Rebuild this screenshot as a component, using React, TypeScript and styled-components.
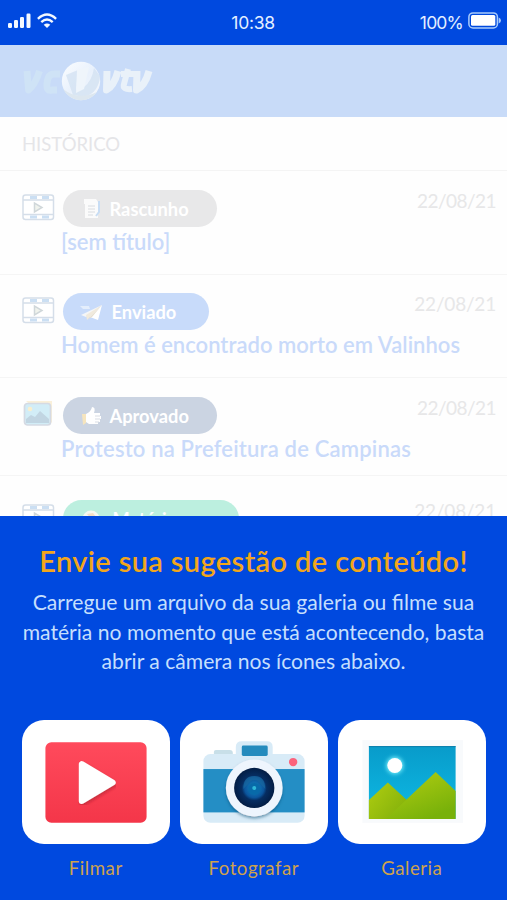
import React from "react";
import styled, { createGlobalStyle } from "styled-components";

const Global = createGlobalStyle`
  * { box-sizing: border-box; }
  html, body { margin: 0; padding: 0; }
  body { background: #fff; font-family: Lato, "Liberation Sans", sans-serif; }
`;

const Screen = styled.div`
  width: 507px;
  height: 900px;
  display: flex;
  flex-direction: column;
  overflow: hidden;
  background: #fefefe;
`;

const StatusBar = styled.header`
  height: 45px;
  flex: none;
  display: grid;
  grid-template-columns: 1fr auto 1fr;
  align-items: center;
  padding: 0 6px 2px 8px;
  background: #0049df;
  color: #e3efff;
  font: 400 17.5px/20px Inter, sans-serif;
`;

const Signals = styled.div`
  display: flex;
  align-items: center;
  gap: 6px;
  margin-top: -2px;
`;

const Clock = styled.span`
  letter-spacing: -0.3px;
  padding-top: 2px;
  margin-left: -3px;
`;

const Battery = styled.div`
  display: flex;
  justify-content: flex-end;
  align-items: center;
  gap: 5px;
  letter-spacing: -0.8px;
  & > span { padding-top: 2px; }
  svg { margin-top: -2px; }
`;

const BrandBar = styled.div`
  height: 72px;
  flex: none;
  background: #c8dbf8;
  padding: 14px 0 0 20px;
`;

const Heading = styled.h2`
  margin: 0;
  height: 54px;
  flex: none;
  padding-left: 22px;
  border-bottom: 1px solid #f4f4f4;
  font-size: 18.5px;
  line-height: 54px;
  font-weight: 400;
  color: #e5e5e8;
`;

const History = styled.div`
  height: 345px;
  flex: none;
  overflow: hidden;
`;

const Entry = styled.article<{ $height: number; $top: number }>`
  height: ${(p) => p.$height}px;
  display: grid;
  grid-template-columns: 33px 1fr auto;
  grid-template-rows: 37px auto;
  column-gap: 8px;
  padding: ${(p) => p.$top}px 11px 0 22px;
  border-bottom: 1px solid #f5f5f5;
`;

const Thumb = styled.div`
  padding-top: 4px;
  svg { display: block; }
`;

const Pill = styled.div<{ $color: string; $width: number }>`
  width: ${(p) => p.$width}px;
  height: 37px;
  border-radius: 19px;
  background: ${(p) => p.$color};
  color: #fff;
  display: flex;
  align-items: center;
  gap: 7px;
  padding-left: 16.5px;
  font-size: 18.3px;
  font-weight: 700;
`;

const DateText = styled.time<{ $spacing: number }>`
  font-size: 19px;
  line-height: 24px;
  letter-spacing: ${(p) => p.$spacing}px;
  color: #e7e7e8;
  margin-top: -1px;
`;

const EntryTitle = styled.h3<{ $spacing: number }>`
  grid-column: 2 / 4;
  margin: 0 0 0 -2px;
  font-size: 22px;
  line-height: 30px;
  font-weight: 600;
  letter-spacing: ${(p) => p.$spacing}px;
  color: #c9dafa;
  white-space: nowrap;
`;

const Sheet = styled.section`
  flex: 1;
  background: #0049df;
  text-align: center;
  padding-top: 27px;
`;

const SheetTitle = styled.h1`
  margin: 0;
  font-size: 29px;
  line-height: 36px;
  font-weight: 600;
  letter-spacing: 0.37px;
  color: #f2a61b;
  white-space: nowrap;
`;

const SheetText = styled.p`
  margin: 9px 0 0;
  font-size: 21.13px;
  line-height: 29.5px;
  color: #c5dffd;
  white-space: nowrap;
`;

const Actions = styled.div`
  display: grid;
  grid-template-columns: repeat(3, 148.5px);
  column-gap: 9.5px;
  padding-left: 21.5px;
  margin-top: 43px;
`;

const Action = styled.button`
  display: block;
  border: 0;
  padding: 0;
  background: none;
  font: 400 18.7px/24px Lato, sans-serif;
  letter-spacing: 0.5px;
  color: #cda24e;
`;

const Tile = styled.div`
  height: 124px;
  border-radius: 22px;
  background: #fff;
  margin-bottom: 12px;
  svg { display: block; width: 100%; }
`;

const SignalIcon = () => (
  <svg width="23" height="16" viewBox="0 0 23 16" fill="#f4f9ff">
    <rect x="0" y="10" width="4" height="5" rx="1.2" />
    <rect x="6" y="7" width="4" height="8" rx="1.2" />
    <rect x="12" y="4" width="4" height="11" rx="1.2" />
    <rect x="18.500" y="0.500" width="4" height="14.500" rx="1.2" />
  </svg>
);

const WifiIcon = () => (
  <svg width="20" height="16" viewBox="0 0 20 16" fill="none" stroke="#f4f9ff" strokeWidth="2.4">
    <path d="M.9 5.800Q10-2.600 19.100 5.800" />
    <path d="M4.300 9.200Q10 4 15.700 9.200" />
    <path d="M10 15 6.700 11.800Q10 9 13.300 11.800Z" fill="#f4f9ff" stroke="none" />
  </svg>
);

const BatteryIcon = () => (
  <svg width="33" height="17" viewBox="0 0 33 17">
    <rect x="0.900" y="0.900" width="28.500" height="15" rx="4" fill="none" stroke="#a9ccfb" strokeWidth="1.500" />
    <rect x="3" y="3" width="24.300" height="10.800" rx="1.500" fill="#fff" />
    <path d="M30.700 5.500q2.300 1 2.300 3t-2.300 3z" fill="#a9ccfb" />
  </svg>
);

const Logo = () => (
  <svg width="136" height="46" viewBox="0 0 136 46">
    <defs>
      <linearGradient id="orb" x1="0" y1="0" x2="1" y2="1">
        <stop offset="0" stopColor="#fbfdff" />
        <stop offset=".5" stopColor="#e9f1fc" />
        <stop offset="1" stopColor="#f5f8fb" />
      </linearGradient>
    </defs>
    <g fill="none" strokeLinejoin="round" strokeWidth="6.800">
      <path d="M7 12 8.500 31Q15 26 19.500 12" stroke="#cfe3f6" />
      <path d="M40 15H34Q28 15 27 24T32 31H37" stroke="#cfe3f6" />
    </g>
    <circle cx="61" cy="22" r="19.200" fill="url(#orb)" />
    <path d="M46 16 58 11 56 31 64 28Q72 22 74 9L80 17Q79 33 65 38L53 36Z" fill="#d0dff1" opacity=".7" />
    <path d="M57 11 69 8 64 30 56 34Z" fill="#eff5fb" />
    <path d="M43 30Q58 42 77 33Q69 43 58 41Q48 39 43 30Z" fill="#dde7ef" />
    <g fill="none" stroke="#e9f1f9" strokeLinejoin="round" strokeWidth="7">
      <path d="M87 12 86.500 31Q94 27 98 12" />
      <path d="M108 10 104 25Q102 31 112 30M101 15H114" strokeWidth="6" />
      <path d="M117 12 116.500 31Q125 27 129 12" />
    </g>
  </svg>
);

const FilmIcon = () => (
  <svg width="33" height="27" viewBox="0 0 33 27" fill="none" stroke="#d5dee9" strokeWidth="1.500">
    <rect x="1" y="1" width="30.500" height="24.500" rx="2.500" fill="#fff" />
    <path d="M1 6H31.500M1 20.500H31.500" />
    <path d="M8 3.500H15M20 3.500H27M8 23H15M20 23H27" stroke="#cbdff3" strokeWidth="3" />
    <path d="M12.500 9V18L20 13.500Z" fill="#f0f3ed" stroke="#d0d7da" />
  </svg>
);

const PhotoIcon = () => (
  <svg width="31" height="27" viewBox="0 0 31 27">
    <path d="M4 0H30V22" fill="#faf0da" />
    <rect x="2.500" y="2.500" width="26" height="21.500" rx="3" fill="#d2edf7" stroke="#d5dae3" strokeWidth="1.700" />
    <circle cx="8" cy="8" r="2.300" fill="#f8efcf" />
    <path d="M4 22V18L9 14 13 16 18 10 27 18V22Z" fill="#c1d5e2" />
  </svg>
);

const DraftIcon = () => (
  <svg width="23" height="22" viewBox="0 0 23 22">
    <path d="M4 1H16L18 4V20H5V6H4Z" fill="#fbfbfb" />
    <path d="M8 8H15M8 11H15M8 14H15M8 17H13" stroke="#d9dce0" />
    <path d="M19 3V14L16 18" fill="none" stroke="#c8ddf4" strokeWidth="2" />
  </svg>
);

const PlaneIcon = () => (
  <svg width="25" height="22" viewBox="0 0 25 22">
    <path d="M0 5 9 5 10 8 3 8Z" fill="#e4eefc" />
    <path d="M22 4 1 14 6 16Z" fill="#f5f6f7" />
    <path d="M22 4 6 14 7 19Z" fill="#f1eadc" />
    <path d="M22 4 10 16 18 19Z" fill="#fff" />
    <path d="M22 4 8 18 12 16Z" fill="#e9e0cd" />
  </svg>
);

const ThumbIcon = () => (
  <svg width="23" height="22" viewBox="0 0 23 22">
    <path d="M2 9H6V18L3 20Z" fill="#f6e5be" />
    <path d="M6 9Q11 7 12 2Q16 2 14 8H20V11H21V14H20V17H18V19H9L6 17Z" fill="#fff" />
    <path d="M15 11H20M15 14H20M15 17H19" stroke="#d9dde4" />
  </svg>
);

const NewsIcon = () => (
  <svg width="26" height="22" viewBox="0 0 26 22">
    <circle cx="11" cy="11" r="8.500" fill="#f5f8f1" />
    <path d="M7 6 13 5 16 9 12 12Z" fill="#f2dfc6" />
  </svg>
);

const PlayArt = () => (
  <svg width="149" height="124" viewBox="0 0 149 124">
    <defs>
      <linearGradient id="red" x1="0" y1="0" x2="0" y2="1">
        <stop stopColor="#ff4a5c" />
        <stop offset="1" stopColor="#f43649" />
      </linearGradient>
      <filter id="playShade"><feDropShadow dx="1" dy="2" stdDeviation="1.500" floodColor="#8f1426" floodOpacity=".45" /></filter>
    </defs>
    <rect x="23.500" y="22" width="101.500" height="81" rx="6" fill="url(#red)" />
    <path d="M60 44V81L91 62.500Z" fill="#fff" stroke="#fff" strokeWidth="6" strokeLinejoin="round" filter="url(#playShade)" />
  </svg>
);

const CameraArt = () => (
  <svg width="149" height="124" viewBox="0 0 149 124">
    <defs>
      <radialGradient id="lens">
        <stop stopColor="#1688c4" />
        <stop offset=".48" stopColor="#0b559c" />
        <stop offset=".62" stopColor="#062d61" />
        <stop offset="1" stopColor="#031d44" />
      </radialGradient>
      <filter id="lensShade"><feDropShadow dx="0" dy="2" stdDeviation="1.500" floodColor="#06456d" floodOpacity=".5" /></filter>
    </defs>
    <path d="M34 35V32Q34 30 36 30H50Q53 30 53 33V35Z" fill="#c8dfe8" />
    <rect x="23.500" y="34" width="101.500" height="69" rx="7" fill="#d8ebf7" />
    <path d="M56 38V27Q56 21 62 21H87Q93 21 93 27V38Z" fill="#d8ebf7" />
    <rect x="62" y="25.500" width="26" height="10.500" rx="1.500" fill="#248bbd" />
    <rect x="23.500" y="49" width="101.500" height="43.500" fill="#248ec5" />
    <circle cx="113.500" cy="42" r="4.200" fill="#fb637c" />
    <circle cx="74.500" cy="68" r="28.500" fill="#eef5fd" filter="url(#lensShade)" />
    <circle cx="74.500" cy="68" r="20.200" fill="url(#lens)" />
    <path d="M63.500 69Q63.500 56 74.500 56T85.500 69L81.500 65Q74.500 55 67.500 65Z" fill="#18679f" opacity=".75" />
    <circle cx="74.500" cy="69" r="6" fill="#086aa9" />
    <circle cx="74.500" cy="68" r="2" fill="#30b8d8" />
  </svg>
);

const GalleryArt = () => (
  <svg width="149" height="124" viewBox="0 0 149 124">
    <defs>
      <linearGradient id="sky" x1="0" y1="0" x2="0" y2="1">
        <stop stopColor="#089bca" /><stop offset="1" stopColor="#0ebbe5" />
      </linearGradient>
      <linearGradient id="hill" x1="0" y1="0" x2=".6" y2="1">
        <stop stopColor="#b5cf12" /><stop offset="1" stopColor="#78b10a" />
      </linearGradient>
      <linearGradient id="hillBack" x1="0" y1="0" x2="1" y2=".6">
        <stop stopColor="#b0ce10" /><stop offset="1" stopColor="#7fae0b" />
      </linearGradient>
      <filter id="glow" x="-1" y="-1" width="3" height="3"><feGaussianBlur stdDeviation="2" /></filter>
    </defs>
    <rect x="24.500" y="20" width="101" height="83" fill="#f8fafc" />
    <rect x="31" y="26" width="87" height="73" fill="url(#sky)" />
    <path d="M31 26.500H118" stroke="#087caa" />
    <circle cx="57" cy="45.500" r="8.500" fill="#7df3ff" filter="url(#glow)" />
    <circle cx="57" cy="45.500" r="7.500" fill="#fff" />
    <path d="M31 80 50 62.500 69 80 80 99H31Z" fill="url(#hillBack)" />
    <path d="M48 99 98 52 118 71V99Z" fill="url(#hill)" />
  </svg>
);

const entries = [
  { label: "Rascunho", title: "[sem título]", color: "#e8e8e9", width: 154, height: 104, top: 19, spacing: 0, dateSpacing: -0.55, thumb: <FilmIcon />, icon: <DraftIcon /> },
  { label: "Enviado", title: "Homem é encontrado morto em Valinhos", color: "#c8dbfa", width: 146, height: 103, top: 18, spacing: 0.02, dateSpacing: -0.2, thumb: <FilmIcon />, icon: <PlaneIcon /> },
  { label: "Aprovado", title: "Protesto na Prefeitura de Campinas", color: "#cbd4e2", width: 154, height: 98, top: 19, spacing: 0.18, dateSpacing: -0.55, thumb: <PhotoIcon />, icon: <ThumbIcon /> },
  { label: "Matéria no ar", title: "", color: "#bcefdf", width: 176, height: 98, top: 24, spacing: 0, dateSpacing: -0.2, thumb: <FilmIcon />, icon: <NewsIcon /> },
];

const actions = [
  { label: "Filmar", art: <PlayArt /> },
  { label: "Fotografar", art: <CameraArt /> },
  { label: "Galeria", art: <GalleryArt /> },
];

export default function App() {
  return (
    <Screen>
      <Global />
      <StatusBar>
        <Signals><SignalIcon /><WifiIcon /></Signals>
        <Clock>10:38</Clock>
        <Battery><span>100%</span><BatteryIcon /></Battery>
      </StatusBar>
      <BrandBar><Logo /></BrandBar>
      <Heading>HISTÓRICO</Heading>
      <History>
        {entries.map((e) => (
          <Entry key={e.label} $height={e.height} $top={e.top}>
            <Thumb>{e.thumb}</Thumb>
            <Pill $color={e.color} $width={e.width}>{e.icon}{e.label}</Pill>
            <DateText $spacing={e.dateSpacing}>22/08/21</DateText>
            <EntryTitle $spacing={e.spacing}>{e.title}</EntryTitle>
          </Entry>
        ))}
      </History>
      <Sheet>
        <SheetTitle>Envie sua sugestão de conteúdo!</SheetTitle>
        <SheetText>
          Carregue um arquivo da sua galeria ou filme sua<br />
          matéria no momento que está acontecendo, basta<br />
          abrir a câmera nos ícones abaixo.
        </SheetText>
        <Actions>
          {actions.map((a) => (
            <Action key={a.label}><Tile>{a.art}</Tile>{a.label}</Action>
          ))}
        </Actions>
      </Sheet>
    </Screen>
  );
}
